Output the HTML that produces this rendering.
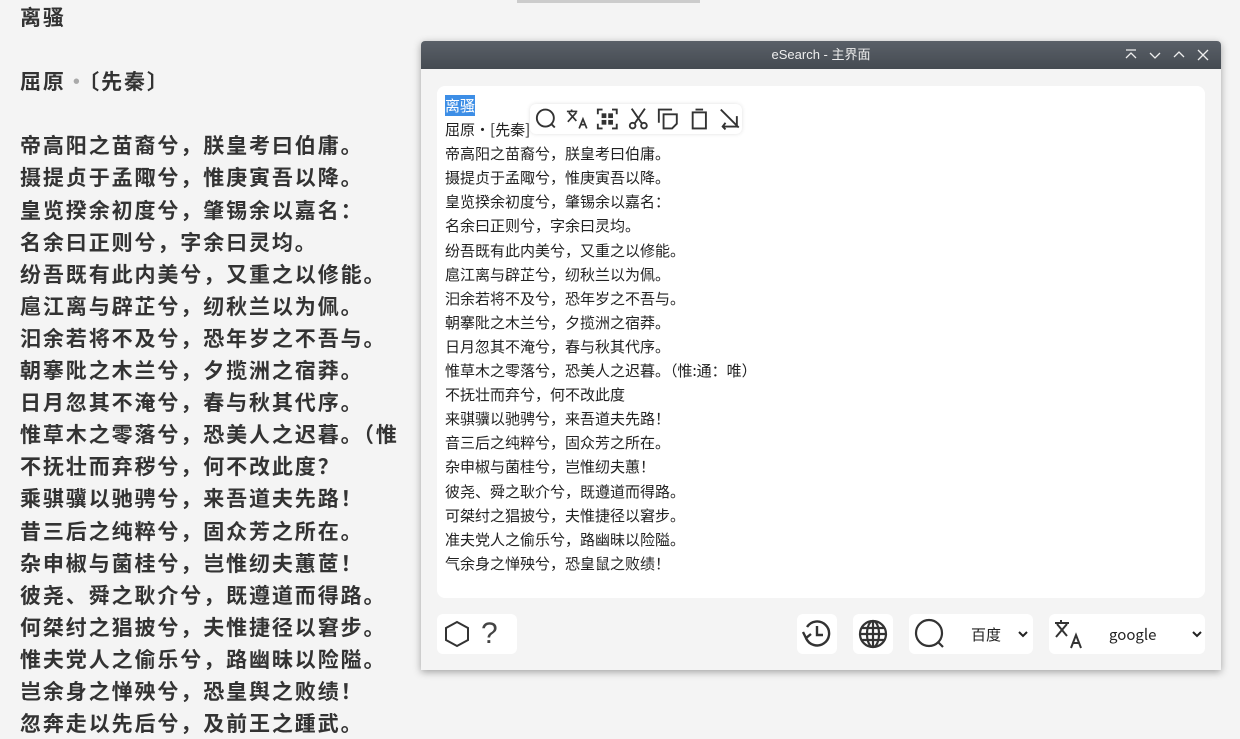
<!DOCTYPE html>
<html><head><meta charset="utf-8"><style>
*{margin:0;padding:0;box-sizing:border-box}
body{width:1240px;height:714px;background:#f4f4f4;overflow:hidden;position:relative;font-family:"Liberation Sans","Noto Sans CJK SC",sans-serif}
.left{position:absolute;left:20px;top:1px;font-size:21px;font-weight:bold;color:#333;line-height:32.1px;white-space:nowrap;letter-spacing:1.9px;font-family:"Noto Sans CJK SC",sans-serif}
.win{position:absolute;left:421px;top:41px;width:800px;height:629px;background:#f4f4f4;border-radius:4px 4px 0 0;box-shadow:0 2px 8px rgba(0,0,0,.35);overflow:hidden}
.tb{height:28px;background:linear-gradient(#5a6068,#454b52);color:#eee;font-size:13px;text-align:center;line-height:28px;position:relative}
.tb .c{position:absolute;top:0;right:10px;display:flex;gap:8px;align-items:center;height:28px}
.ta{position:absolute;left:16px;top:45px;width:768px;height:512px;background:#fff;border-radius:8px;padding:8px 8px;font-size:15px;line-height:24.1px;color:#222;font-family:"Noto Sans CJK SC",sans-serif}
.sel{background:#3d8ee6;color:#fff}
.pop{position:absolute;left:93px;top:18px;width:212px;height:30px;background:#fff;border-radius:6px;box-shadow:0 0 4px rgba(0,0,0,.12);display:flex;align-items:center;gap:6px;padding-left:4px}
.btn{position:absolute;top:573px;height:40px;background:#fff;border-radius:6px;display:flex;align-items:center;justify-content:center}
select{border:none;background:transparent;font-size:15px;font-family:"Noto Sans CJK SC",sans-serif;color:#222}
</style></head><body>
<div style="position:absolute;left:517px;top:0;width:183px;height:3px;background:#ccc"></div>
<div class="left">离骚<br><br>屈原<span style="color:#aaa">·</span>〔先秦〕<br><br>帝高阳之苗裔兮，朕皇考曰伯庸。<br>摄提贞于孟陬兮，惟庚寅吾以降。<br>皇览揆余初度兮，肇锡余以嘉名：<br>名余曰正则兮，字余曰灵均。<br>纷吾既有此内美兮，又重之以修能。<br>扈江离与辟芷兮，纫秋兰以为佩。<br>汩余若将不及兮，恐年岁之不吾与。<br>朝搴阰之木兰兮，夕揽洲之宿莽。<br>日月忽其不淹兮，春与秋其代序。<br>惟草木之零落兮，恐美人之迟暮。（惟<br>不抚壮而弃秽兮，何不改此度？<br>乘骐骥以驰骋兮，来吾道夫先路！<br>昔三后之纯粹兮，固众芳之所在。<br>杂申椒与菌桂兮，岂惟纫夫蕙茝！<br>彼尧、舜之耿介兮，既遵道而得路。<br>何桀纣之猖披兮，夫惟捷径以窘步。<br>惟夫党人之偷乐兮，路幽昧以险隘。<br>岂余身之惮殃兮，恐皇舆之败绩！<br>忽奔走以先后兮，及前王之踵武。</div>
<div class="win">
<div class="tb">eSearch - 主界面<div class="c">
<svg width="16" height="16" viewBox="0 0 16 16" fill="none" stroke="#eee" stroke-width="1.3"><path d="M3 3h10M3 11l5-5 5 5"/></svg>
<svg width="16" height="16" viewBox="0 0 16 16" fill="none" stroke="#eee" stroke-width="1.3"><path d="M3 6l5 5 5-5"/></svg>
<svg width="16" height="16" viewBox="0 0 16 16" fill="none" stroke="#eee" stroke-width="1.3"><path d="M3 10l5-5 5 5"/></svg>
<svg width="16" height="16" viewBox="0 0 16 16" fill="none" stroke="#eee" stroke-width="1.3"><path d="M3 3l10 10M13 3L3 13"/></svg>
</div></div>
<div class="ta"><span class="sel">离骚</span><br>屈原·[先秦]<br>帝高阳之苗裔兮，朕皇考曰伯庸。<br>摄提贞于孟陬兮，惟庚寅吾以降。<br>皇览揆余初度兮，肇锡余以嘉名：<br>名余曰正则兮，字余曰灵均。<br>纷吾既有此内美兮，又重之以修能。<br>扈江离与辟芷兮，纫秋兰以为佩。<br>汩余若将不及兮，恐年岁之不吾与。<br>朝搴阰之木兰兮，夕揽洲之宿莽。<br>日月忽其不淹兮，春与秋其代序。<br>惟草木之零落兮，恐美人之迟暮。（惟:通：唯）<br>不抚壮而弃兮，何不改此度<br>来骐骥以驰骋兮，来吾道夫先路！<br>音三后之纯粹兮，固众芳之所在。<br>杂申椒与菌桂兮，岂惟纫夫蕙！<br>彼尧、舜之耿介兮，既遵道而得路。<br>可桀纣之猖披兮，夫惟捷径以窘步。<br>准夫党人之偷乐兮，路幽昧以险隘。<br>气余身之惮殃兮，恐皇鼠之败绩！
<div class="pop">
<svg width="26" height="26" viewBox="0 0 26 26" fill="none" stroke="#333" stroke-width="2"><circle cx="12" cy="12" r="9"/><path d="M18 18l4 4"/></svg>
<svg width="26" height="26" viewBox="0 0 26 26" fill="none" stroke="#333" stroke-width="1.8"><path d="M2 5h11M7 3v2M4 6l8 9M12 6l-9 10M15 23l4-10 4 10M16.5 19h5"/></svg>
<svg width="26" height="26" viewBox="0 0 26 26" fill="none" stroke="#333" stroke-width="2"><path d="M3 8V3h5M18 3h5v5M23 18v5h-5M8 23H3v-5"/><rect x="8" y="8" width="3" height="3" fill="#333"/><rect x="15" y="8" width="3" height="3" fill="#333"/><rect x="8" y="15" width="3" height="3" fill="#333"/><rect x="15" y="15" width="3" height="3" fill="#333"/></svg>
<svg width="26" height="26" viewBox="0 0 26 26" fill="none" stroke="#333" stroke-width="2"><circle cx="7" cy="20" r="3"/><circle cx="19" cy="20" r="3"/><path d="M6 2l11 16M20 2L9 18"/></svg>
<svg width="26" height="26" viewBox="0 0 26 26" fill="none" stroke="#333" stroke-width="2"><path d="M3 17V3h14"/><path d="M8 8h14v10l-5 5H8z"/></svg>
<svg width="26" height="26" viewBox="0 0 26 26" fill="none" stroke="#333" stroke-width="2"><rect x="6" y="6" width="14" height="17"/><path d="M9 3h8"/></svg>
<svg width="26" height="26" viewBox="0 0 26 26" fill="none" stroke="#333" stroke-width="2"><path d="M4 3l19 19M21 10v11H6M9 17l-3 4 3 3"/></svg>
</div></div>
<div class="btn" style="left:16px;width:80px;justify-content:flex-start;padding-left:6px;gap:10px">
<svg width="28" height="30" viewBox="0 0 28 30" fill="none" stroke="#333" stroke-width="2"><path d="M14 3l11 6v12l-11 6-11-6V9z"/></svg>
<span style="font-size:30px;color:#444;font-weight:300">?</span></div>
<div class="btn" style="left:376px;width:40px"><svg width="32" height="32" viewBox="0 0 32 32" fill="none" stroke="#333" stroke-width="2.4"><path d="M5 20A12 12 0 1 0 6 9"/><path d="M2 14l3 6 5-4M16 8v9h6"/></svg></div>
<div class="btn" style="left:432px;width:40px"><svg width="32" height="32" viewBox="0 0 32 32" fill="none" stroke="#333" stroke-width="2.2"><circle cx="16" cy="16" r="13"/><ellipse cx="16" cy="16" rx="6" ry="13"/><path d="M16 3v26M3 16h26M5 10h22M5 22h22"/></svg></div>
<div class="btn" style="left:488px;width:124px;justify-content:flex-start;padding-left:4px"><svg width="34" height="34" viewBox="0 0 34 34" fill="none" stroke="#333" stroke-width="2.2"><circle cx="16" cy="16" r="13"/><path d="M25 25l5 5"/></svg><select style="margin-left:20px;width:64px"><option>百度</option></select></div>
<div class="btn" style="left:628px;width:156px;justify-content:flex-start;padding-left:4px"><svg width="32" height="34" viewBox="0 0 32 34" fill="none" stroke="#333" stroke-width="2"><path d="M2 6h14M8 3v3M4 7l10 12M14 7L3 20M18 31l5-13 5 13M20 26h6"/></svg><select style="margin-left:20px;width:100px"><option>google</option></select></div>
</div>
</body></html>
